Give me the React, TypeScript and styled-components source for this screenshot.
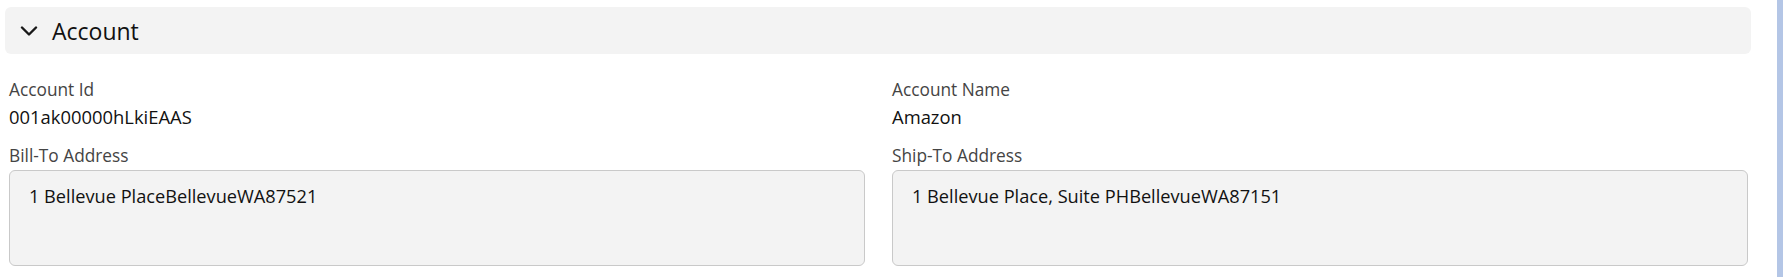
import React from "react";
import styled, { createGlobalStyle } from "styled-components";

const GlobalStyle = createGlobalStyle`
  html, body {
    margin: 0;
    padding: 0;
    background: #ffffff;
  }
  body {
    font-family: "Open Sans", "Noto Sans", Arial, sans-serif;
    color: #181818;
  }
`;

const Page = styled.div`
  display: flex;
  height: 277px;
  width: 1783px;
  overflow: hidden;
`;

const Main = styled.div`
  flex: 1;
  padding: 7px 26px 0 5px;
`;

const ScrollTrack = styled.div`
  width: 6px;
  flex: none;
  background: #b4c6e6;
`;

const SectionHeader = styled.div`
  display: flex;
  align-items: center;
  gap: 14px;
  height: 47px;
  padding-left: 15px;
  background: #f3f3f3;
  border-radius: 6px;
`;

const SectionTitle = styled.span`
  font-size: 23px;
  line-height: 30px;
  color: #111111;
`;

const FieldGrid = styled.div`
  display: grid;
  grid-template-columns: 1fr 1fr;
  column-gap: 27px;
  padding: 24px 3px 0 4px;
`;

const Field = styled.div<{ $gapAfter?: number }>`
  display: flex;
  flex-direction: column;
  margin-bottom: ${(p) => p.$gapAfter ?? 0}px;
`;

const Label = styled.div`
  font-size: 17.3px;
  line-height: 24px;
  color: #444444;
  margin-bottom: 2px;
`;

const Value = styled.div`
  font-size: 18.4px;
  line-height: 26px;
  color: #111111;
`;

const AddressBox = styled.div`
  box-sizing: border-box;
  height: 96px;
  padding: 12px 19px;
  background: #f3f3f3;
  border: 1px solid #c9c9c9;
  border-radius: 6px;
  font-size: 18.2px;
  line-height: 26px;
  color: #111111;
`;

const Chevron = () => (
  <svg width="18" height="10" viewBox="0 0 18 10" fill="none">
    <polyline
      points="2,1.5 9,8.5 16,1.5"
      stroke="#181818"
      strokeWidth="2.4"
      strokeLinecap="round"
      strokeLinejoin="round"
    />
  </svg>
);

export default function App() {
  return (
    <>
      <GlobalStyle />
      <Page>
        <Main>
          <SectionHeader>
            <Chevron />
            <SectionTitle>Account</SectionTitle>
          </SectionHeader>
          <FieldGrid>
            <Field $gapAfter={14}>
              <Label>Account Id</Label>
              <Value>001ak00000hLkiEAAS</Value>
            </Field>
            <Field $gapAfter={14}>
              <Label>Account Name</Label>
              <Value>Amazon</Value>
            </Field>
            <Field>
              <Label>Bill-To Address</Label>
              <AddressBox>1 Bellevue PlaceBellevueWA87521</AddressBox>
            </Field>
            <Field>
              <Label>Ship-To Address</Label>
              <AddressBox>1 Bellevue Place, Suite PHBellevueWA87151</AddressBox>
            </Field>
          </FieldGrid>
        </Main>
        <ScrollTrack />
      </Page>
    </>
  );
}
